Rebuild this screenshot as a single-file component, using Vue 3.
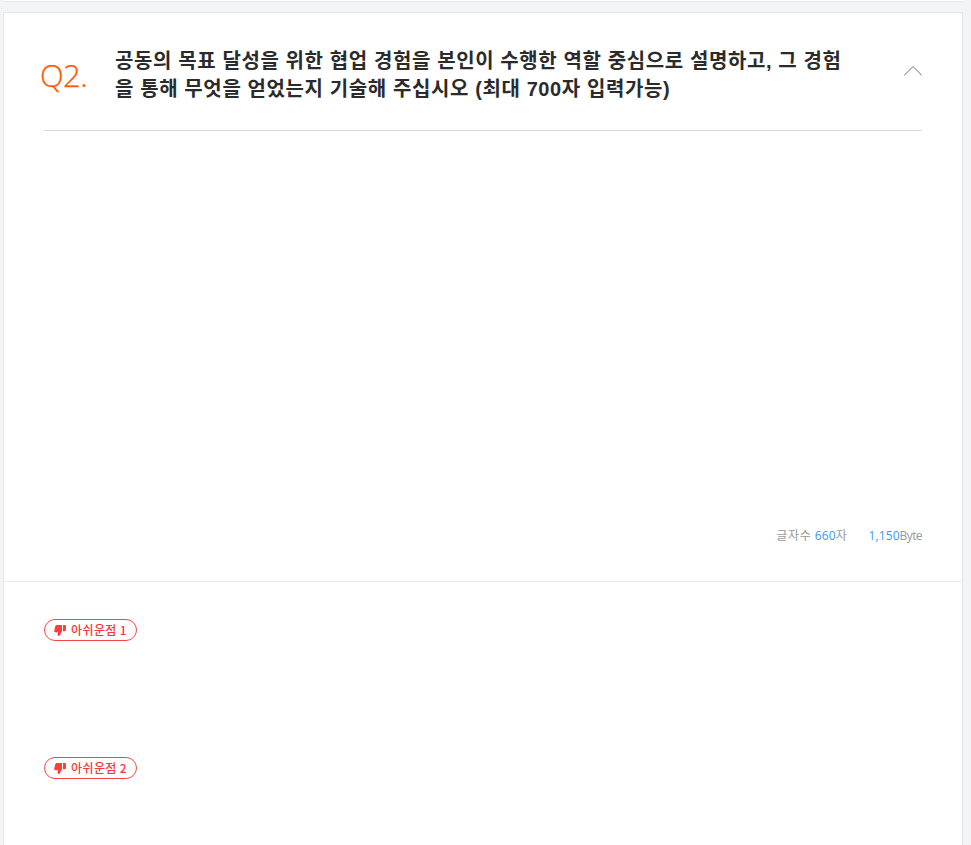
<script setup>
const items = ['아쉬운점 1', '아쉬운점 2']
</script>

<template>
  <div class="page">
    <div class="topline"></div>
    <section class="card">
      <header class="head">
        <span class="qno">Q2<i>.</i></span>
        <h2 class="title">공동의 목표 달성을 위한 협업 경험을 본인이 수행한 역할 중심으로 설명하고, 그 경험을 통해 무엇을 얻었는지 기술해 주십시오 (최대 700자 입력가능)</h2>
        <svg class="chev" width="18" height="10" viewBox="0 0 18 10"><path d="M0 9.500 9 .5 18 9.500" fill="none" stroke="#6f6f6f" stroke-width="1"/></svg>
      </header>
      <div class="answer">
        <div class="count">
          <span><span class="ko">글자수</span> <b>660</b><span class="ko">자</span></span>
          <span class="bytes"><b>1,150</b><em>Byte</em></span>
        </div>
      </div>
      <div class="review">
        <div v-for="item in items" :key="item" class="row">
          <span class="badge">
            <svg width="12" height="11" viewBox="0 0 12 11"><path d="M.2 5.600 1.300 1.300C1.500.5 2 0 2.800 0H8v6L6 10.200c-.2.500-.7.800-1.200.8-.8 0-1.300-.6-1.200-1.400L4 7.200H1.300C.5 7.200 0 6.400.2 5.600ZM9 0h1.800C11.500 0 12 .5 12 1.200v3.900c0 .7-.5 1.200-1.200 1.200H9Z" fill="#fb3f3f"/></svg>
            {{ item }}
          </span>
        </div>
      </div>
    </section>
  </div>
</template>

<style>
html, body { margin: 0; background: #f3f4f7; }
</style>

<style scoped>
.page {
  height: 845px;
  overflow: hidden;
  background: #f3f4f7;
  font-family: "Liberation Sans", "Noto Sans CJK KR", sans-serif;
}
.topline {
  height: 1px;
  margin: 0 8px 0 3px;
  background: #fff;
  border-bottom: 1px solid #e8e8e8;
}
.card {
  box-sizing: border-box;
  width: 960px;
  height: 900px;
  margin: 10px 0 0 3px;
  background: #fff;
  border: 1px solid #e6e6e6;
}
.head {
  display: flex;
  align-items: flex-start;
  height: 117px;
  margin: 0 40px;
  border-bottom: 1px solid #d9d9d9;
}
.qno {
  width: 75px;
  flex: none;
  margin: 44px 0 0 -4px;
  font-family: "Open Sans", sans-serif;
  font-weight: 300;
  font-size: 31px;
  line-height: 36px;
  letter-spacing: -.6px;
  color: #ff5a00;
  -webkit-text-stroke: .25px #ff5a00;
}
.qno i { font-style: normal; }
.title {
  width: 735px;
  flex: none;
  margin: 34px 0 0;
  font-size: 20px;
  line-height: 28px;
  font-weight: 700;
  letter-spacing: .61px;
  color: #2b2b2b;
  word-break: break-all;
}
.chev { flex: none; margin: 53px 0 0 auto; }
.answer {
  display: flex;
  flex-direction: column;
  justify-content: flex-end;
  height: 450px;
  border-bottom: 1px solid #ececec;
  padding: 0 40px;
}
.count {
  display: flex;
  justify-content: flex-end;
  gap: 21px;
  height: 53px;
  font-family: "Open Sans", "Noto Sans CJK KR", sans-serif;
  font-size: 12px;
  line-height: 16px;
  color: #999;
}
.count .ko { letter-spacing: .8px; }
.count b { font-weight: 400; letter-spacing: .1px; color: #3d94ff; }
.count em { font-style: normal; letter-spacing: -.6px; }
.review { padding: 37px 40px 0; }
.row { display: flex; align-items: flex-start; height: 138px; }
.badge {
  display: inline-flex;
  align-items: center;
  gap: 5px;
  box-sizing: border-box;
  height: 22px;
  width: 93px;
  padding: 0 0 2px 9px;
  border: 1px solid #fb4545;
  border-radius: 11px;
  font-family: "Noto Sans CJK KR", sans-serif;
  font-size: 12px;
  font-weight: 500;
  letter-spacing: .4px;
  color: #fb3535;
}
.badge svg { margin-top: 2px; }
</style>
